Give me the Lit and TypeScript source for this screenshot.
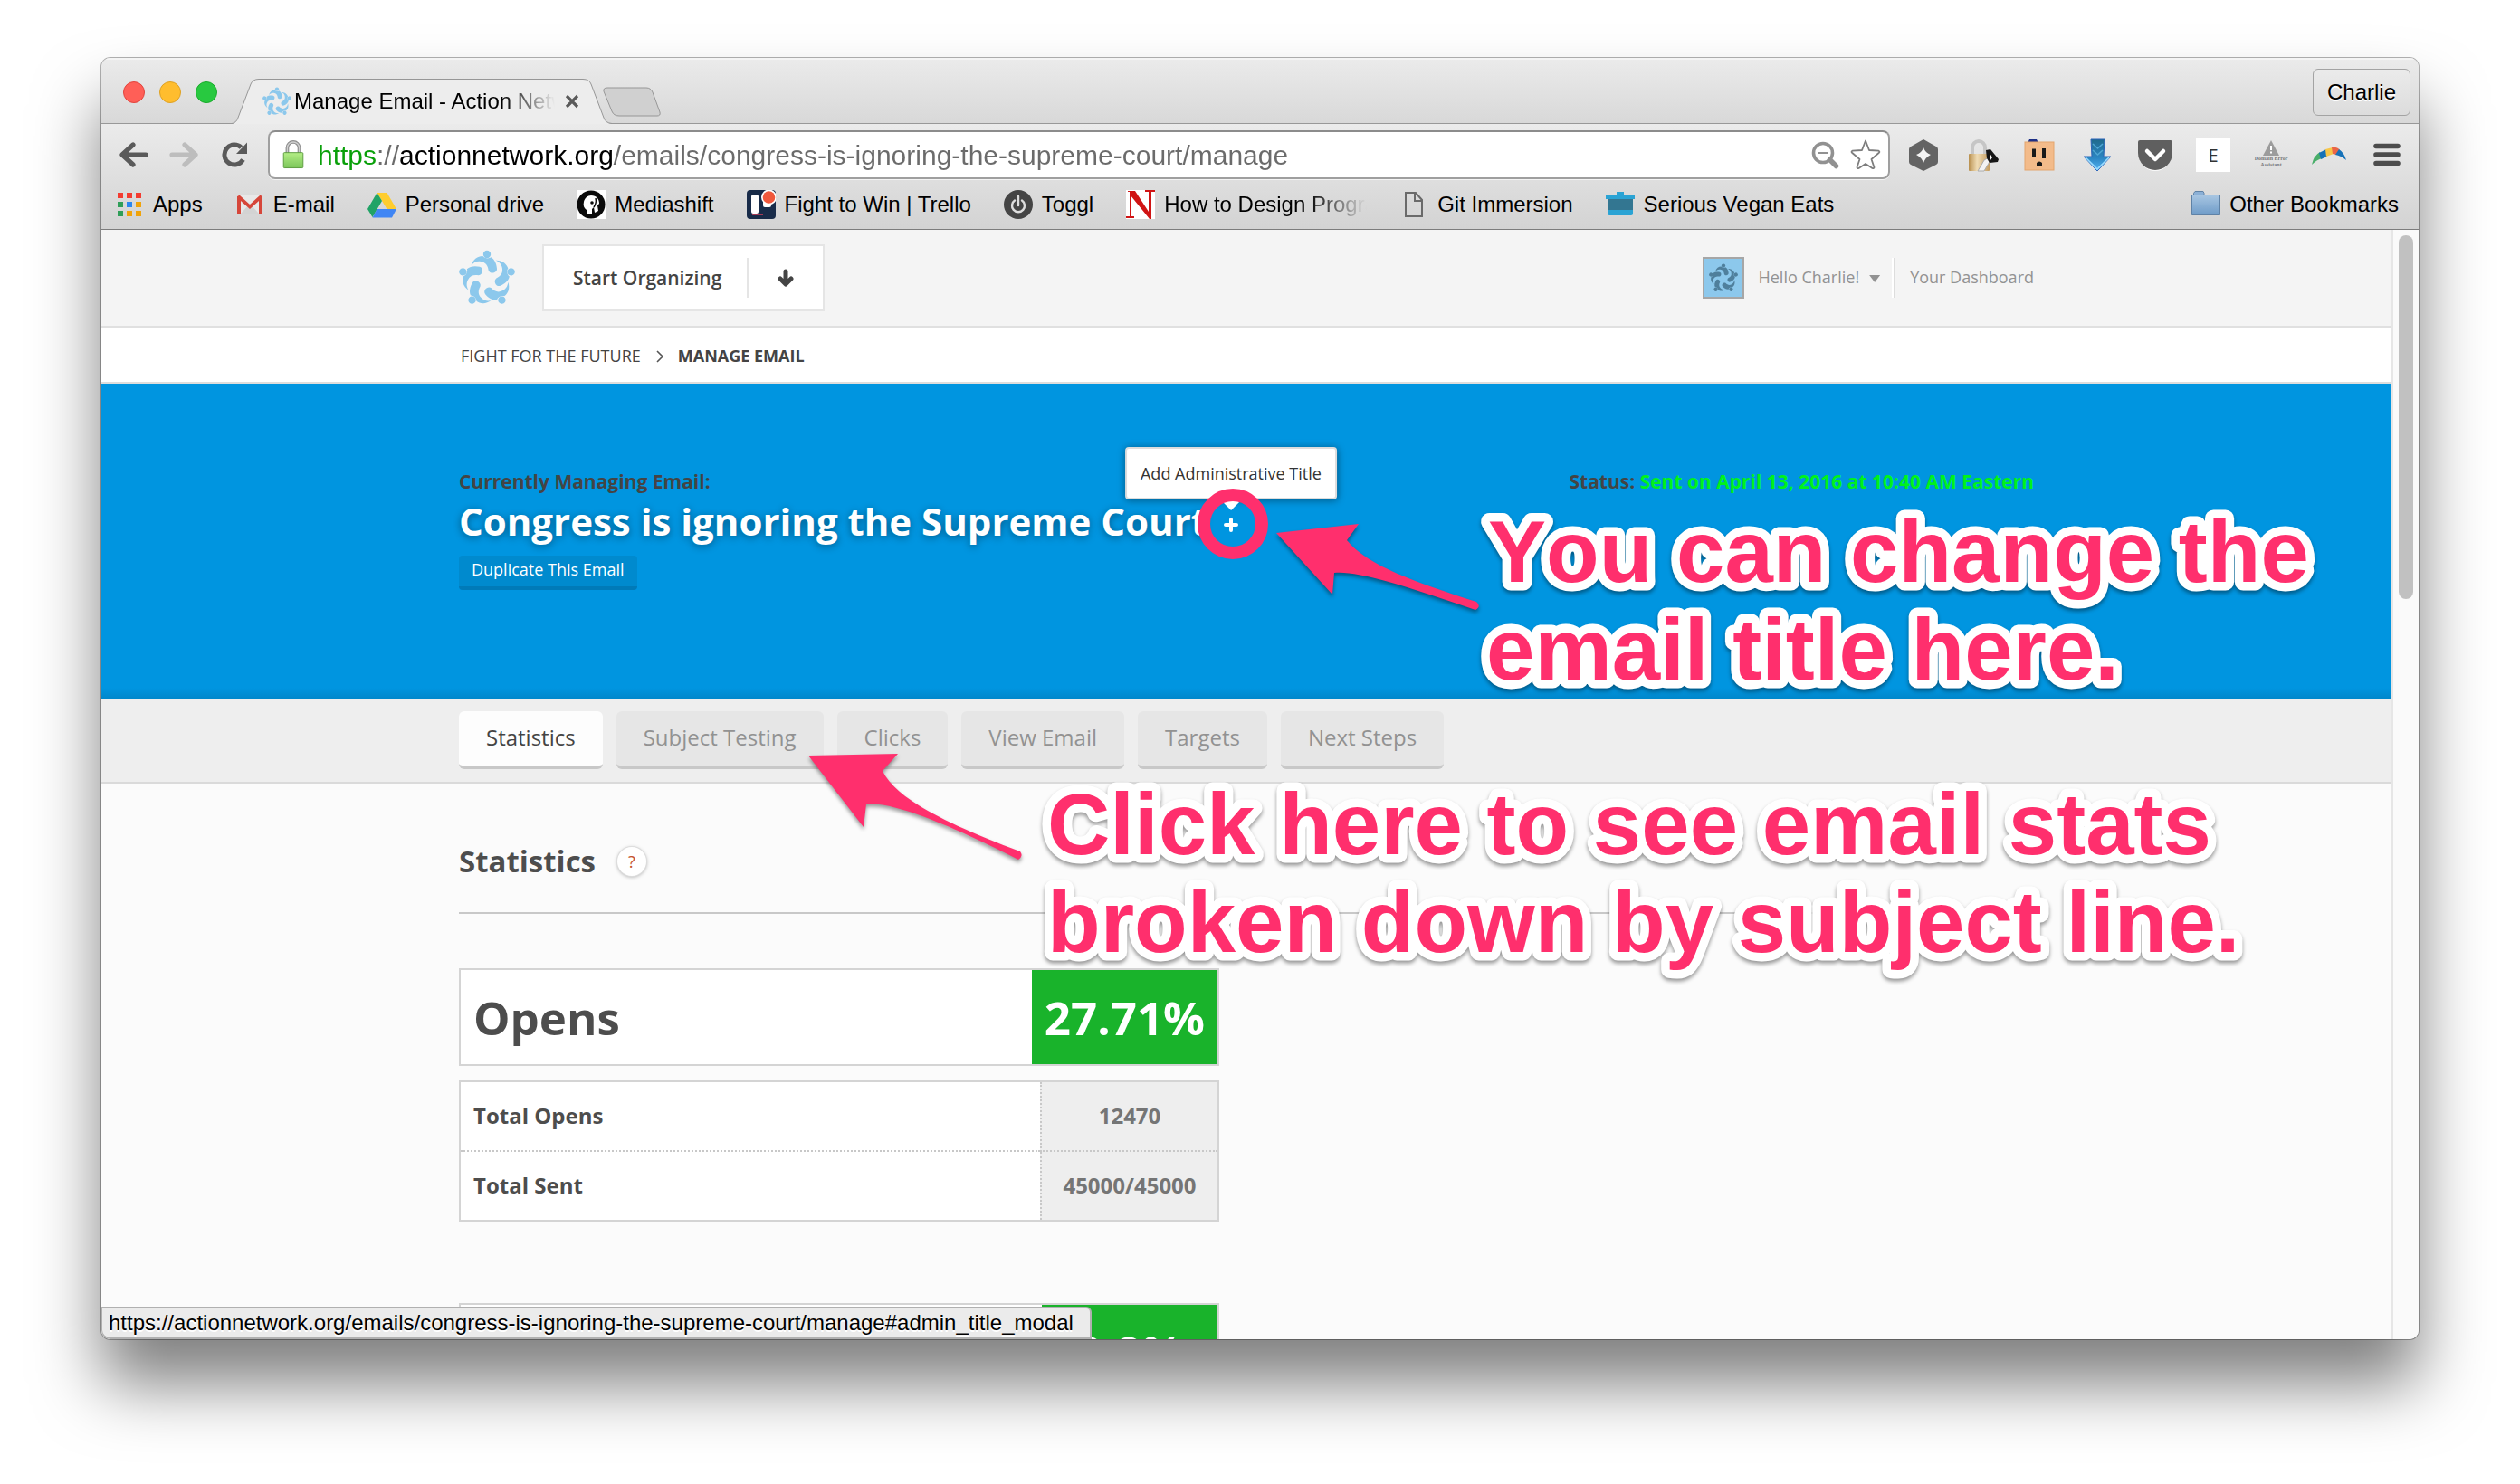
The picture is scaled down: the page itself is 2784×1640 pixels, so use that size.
import { LitElement, html, svg, css } from "lit";
import { customElement, property } from "lit/decorators.js";

const arm = "M125 127C131 105 149 95 163 96C170 105 184 105 190 100C203 107 209 124 210 138C211 153 187 157 182 143C180 127 172 116 156 114C142 112 132 118 125 127Z";

@customElement("network-mark")
class NetworkMark extends LitElement {
  static styles = css`
    :host { display: block; color: #8cc8ec; }
    .mark { display: block; width: 100%; height: 100%; fill: currentColor; }
  `;
  render() {
    return html`<svg class="mark" viewBox="84 76 186 184" aria-hidden="true">
      ${[0, 72, 144, 216, 288].map(
        (a) => svg`<g transform="rotate(${a} 177 174)"><circle cx="177" cy="90" r="12.5"/><path d=${arm}/></g>`
      )}
    </svg>`;
  }
}

const icons: Record<string, unknown> = {
  apps: svg`${[0, 1, 2].map((r) => [0, 1, 2].map((c) => svg`<rect x=${3 + c * 10} y=${3 + r * 10} width="6" height="6" fill=${["#f33b30", "#f33b30", "#f33b30", "#2f9e58", "#2a86f0", "#f0a30a", "#2f9e58", "#f0a30a", "#f0a30a"][r * 3 + c]}/>`))}`,
  gmail: svg`<path d="M2 6h28v20H2z" fill="#e8e8e8"/><path d="M6 26 16 15l10 11z" fill="#d3d3d3"/><path d="M2 26V7l2-1h1l11 10L27 6h1l2 1v19h-4V12L16 21 6 12v14z" fill="#d6463a"/>`,
  drive: svg`<path d="M10.500 3h11L32 21H21.500z" fill="#ffcd2e"/><path d="M10.500 3 16 12 5.500 30 0 21z" fill="#21a366"/><path d="M10.500 21H32l-5 9.500H5.500z" fill="#4086f4"/>`,
  media: svg`<path d="M0 0h32v32H0z" fill="#fff"/><circle cx="16" cy="16" r="15.500" fill="#0a0a0a"/><path d="M16 6c6 0 9 4 9 9l-2 2 1 6-4 2-1-6-2 2v5h-5l-1-4c-3-2-4-5-3-9 1-4 4-7 8-7z" fill="#fff"/><circle cx="17" cy="14" r="1.800" fill="#0a0a0a"/><path d="M21 9c1 4 0 7-2 10" fill="none" stroke="#0a0a0a" stroke-width="1.500"/>`,
  trello: svg`<rect width="32" height="32" rx="4" fill="#182b49"/><rect x="5" y="5" width="8" height="21" rx="2" fill="#fff"/><path d="M18 5h9v12q0 2-2 2h-5q-2 0-2-2z" fill="#fff"/><circle cx="24.500" cy="8" r="8.500" fill="#fff"/><circle cx="24.500" cy="8" r="6.800" fill="#f0583c"/><path d="M6 27h12" stroke="#a33a56" stroke-width="2"/>`,
  toggl: svg`<circle cx="16" cy="16" r="16" fill="#454545"/><path d="M12 11.500a7 7 0 1 0 8 0M16 7v10" fill="none" stroke="#ddd" stroke-width="2.400" stroke-linecap="round"/>`,
  news: svg`<path d="M0 0h32v32H0z" fill="#fff"/><path d="M2 1h8l15 23V2h-4V0h11v2h-4v30h-2L5 6v23h4v2H0v-2h4V2H2z" fill="#d01414"/>`,
  file: svg`<path d="M7 3h11l7 8v18H7zM17 3v9h8" fill="none" stroke="#6a6a6a" stroke-width="2"/>`,
  pot: svg`<path d="M12 2h8v4h12v4h-2v16q0 2-2 2H4q-2 0-2-2V10H0V6h12z" fill="#2aa3d4"/><path d="M2 10h28v12H2z" fill="#337691"/>`,
  folder: svg`<defs><linearGradient id="fold" x2="0" y2="1"><stop stop-color="#a8c6e2"/><stop offset="1" stop-color="#6e9bc8"/></linearGradient></defs><path d="M2.500 6V3.500L4 1.500h9l1 2V6" fill="#8bb0d6" stroke="#5f82a6"/><path d="M.5 5.500h31v22H.5z" fill="url(#fold)" stroke="#5f82a6"/>`,
  back: svg`<path d="M16 5 4 16l12 11M5 16h25" fill="none" stroke="#5a5a5a" stroke-width="5.200" stroke-linecap="round" stroke-linejoin="round"/>`,
  forward: svg`<path d="M17 5 29 16 17 27M28 16H3" fill="none" stroke="#bdbdbd" stroke-width="5.200" stroke-linecap="round" stroke-linejoin="round"/>`,
  reload: svg`<path d="M25.500 21.500A11 11 0 1 1 23.500 8" fill="none" stroke="#5a5a5a" stroke-width="5"/><path d="M30 2.500V15H18z" fill="#5a5a5a"/>`,
  lock: svg`<defs><linearGradient id="lk" x2="0" y2="1"><stop stop-color="#b4ee86"/><stop offset="1" stop-color="#7cc65a"/></linearGradient></defs><path d="M9 15V8a7 7 0 0 1 14 0v7" fill="none" stroke="#8e8e8e" stroke-width="4"/><path d="M9 15V8a7 7 0 0 1 14 0v7" fill="none" stroke="#cfcfcf" stroke-width="1.500"/><rect x="4.500" y="13.500" width="23" height="18" rx="1" fill="url(#lk)" stroke="#5a9a3c"/>`,
  zoomout: svg`<circle cx="14" cy="14" r="10.500" fill="none" stroke="#919191" stroke-width="3.600"/><path d="M9 14h10" stroke="#919191" stroke-width="2.200"/><path d="m21.500 21.500 7 7" stroke="#919191" stroke-width="5.500" stroke-linecap="round"/>`,
  star: svg`<path d="m17 1.500 4 10.500 10.500.7q1.500.8.4 2L23.500 22l3 9q-.3 1.600-2 1L17 27l-7.500 5q-1.700.6-2-1l3-9L2 14.700q-1.100-1.200.4-2L13 12z" fill="#fff" stroke="#7d7d7d" stroke-width="1.800" stroke-linejoin="round"/>`,
  hexa: svg`<path d="M19 2 33 10q2 1 2 3v14q0 2-2 3L19 37 5 30q-2-1-2-3V13q0-2 2-3z" fill="#646464"/><path d="M19 11q2 6 8 8-6 3-8 9-2-6-8-9 6-2 8-8z" fill="#f4f4f4"/>`,
  padlock: svg`<defs><linearGradient id="br"><stop stop-color="#b88f4e"/><stop offset=".4" stop-color="#f0dcb4"/><stop offset="1" stop-color="#c39c60"/></linearGradient></defs><path d="M9 19v-8a7 7 0 0 1 14 0v8" fill="none" stroke="#c6c6c6" stroke-width="4"/><rect x="5" y="18" width="23" height="19" rx="1" fill="url(#br)"/><path d="m15 37 7-12 5-3 2 3-7 12z" fill="#f2f2f2" stroke="#aaa"/><path d="m24 14 5-1 9 11-1 3-9 1-3-5z" fill="#161616"/><path d="m28 17 3 5-2 3z" fill="#fff"/>`,
  outlet: svg`<path d="m6 6 2-4h8l2 4z" fill="#1d2f86"/><rect x="3" y="5" width="32" height="31" fill="#f3bb8a" stroke="#e3a56e"/><path d="M13 12.500v9M24 12v11" stroke="#1a1a1a" stroke-width="4"/><path d="M16 31v-3q3-3 6 0v3z" fill="#1a1a1a"/>`,
  down: svg`<defs><linearGradient id="dn" x2="0" y2="1"><stop stop-color="#1f6a8c"/><stop offset=".6" stop-color="#2c87c4"/><stop offset="1" stop-color="#57b6f6"/></linearGradient></defs><path d="M12 2h15l-1 19h8L19 37 4 21h9z" fill="url(#dn)" stroke="#2b63b8" stroke-linejoin="round"/><path d="m14 7 5.500 5L25 7M14 14l5.500 5 5.500-5" fill="none" stroke="#4fa6d4" stroke-width="1.600"/><path d="m6 22 13 13 13-13" fill="none" stroke="#9adcff" stroke-width="1.600"/>`,
  pocket: svg`<path d="M1 6q0-2 2-2h32q2 0 2 2v13a18 18 0 0 1-36 0z" fill="#fff" opacity=".8"/><path d="M0 5q0-2 2-2h34q2 0 2 2v12a19 19 0 0 1-38 0z" fill="#5f5f5f"/><path d="m10 15 9 9 9-9" fill="none" stroke="#fff" stroke-width="4.500" stroke-linecap="round" stroke-linejoin="round"/>`,
  warn: svg`<path d="M19 3 28 20H10z" fill="#9c9c9c"/><path d="M19 9v5M19 15.500v2" stroke="#fff" stroke-width="2"/>`,
  boomerang: svg`<path d="M0 30q2-10 9-14l3 7q-6 1-12 7z" fill="#49ae6a"/><path d="m8 17 8-4 1 8-7 3z" fill="#1672b8"/><path d="m15 13 8-2 1 7-8 3z" fill="#f7c648"/><path d="M22 11q6-1 9 3l-4 5-4-1z" fill="#ea6547"/><path d="M30 13q6 4 8 12-6-5-12-6z" fill="#1672b8"/>`,
  menu: svg`<path d="M7 9.500h24M7 19h24M7 28.500h24" stroke="#4c4c4c" stroke-width="5.600" stroke-linecap="round"/>`,
  close: svg`<path d="m2 2 12 12M14 2 2 14" stroke="#5a5a5a" stroke-width="3.200"/>`,
  arrowdown: svg`<path d="M10 3v13M4 11l6 6 6-6" fill="none" stroke="#444" stroke-width="5" stroke-linecap="round" stroke-linejoin="round"/>`,
  plus: svg`<path d="M8 2v12M2 8h12" stroke="#fff" stroke-width="4" stroke-linecap="round"/>`,
  chevron: svg`<path d="m2 2 6 6-6 6" fill="none" stroke="#555" stroke-width="1.600"/>`,
};
const icon = (name: string, box = 32, cls = "icon") =>
  html`<svg class=${cls} viewBox="0 0 ${box} ${box}" aria-hidden="true">${icons[name]}</svg>`;

const bookmarks: [string, string][] = [
  ["apps", "Apps"],
  ["gmail", "E-mail"],
  ["drive", "Personal drive"],
  ["media", "Mediashift"],
  ["trello", "Fight to Win | Trello"],
  ["toggl", "Toggl"],
  ["news", "How to Design Programs"],
  ["file", "Git Immersion"],
  ["pot", "Serious Vegan Eats"],
];

@customElement("browser-chrome")
class BrowserChrome extends LitElement {
  static styles = css`
    :host { display: block; font-family: "Liberation Sans", Arial, sans-serif; font-size: 24px; color: #000; }
    * { box-sizing: border-box; }
    button { border: 0; padding: 0; background: none; font: inherit; color: inherit; }
    a { color: inherit; text-decoration: none; }
    .strip { display: flex; align-items: flex-end; height: 73px; padding-left: 24px; background: linear-gradient(#ebebeb, #d8d8d8); box-shadow: inset 0 -1px #989898, inset 0 2px #f4f4f4; }
    .lights { display: flex; gap: 16px; height: 24px; margin-bottom: 23px; }
    .light { width: 24px; height: 24px; border-radius: 50%; border: 1px solid; }
    .red { background: #ff5f57; border-color: #e2443d; }
    .amber { background: #ffbd2e; border-color: #dea123; }
    .green { background: #28c940; border-color: #1aab2c; }
    .tab { position: relative; display: flex; align-items: center; width: 420px; height: 50px; margin-left: 16px; padding: 0 36px 0 34px; gap: 3px; }
    .shape { position: absolute; inset: 0; width: 100%; height: 100%; }
    .mark { position: relative; width: 32px; height: 32px; flex: none; }
    .label { position: relative; flex: 1; overflow: hidden; white-space: nowrap; mask-image: linear-gradient(to right, #000 80%, transparent); line-height: 30px; }
    .close { position: relative; width: 16px; height: 16px; margin-left: 8px; }
    .newtab { width: 64px; height: 33px; margin: 0 0 8px -10px; }
    .fill { display: block; width: 100%; height: 100%; }
    .profile { width: 108px; height: 52px; margin: 0 9px 9px auto; border: 1px solid #a3a3a3; border-radius: 6px; background: linear-gradient(#ebebeb, #dcdcdc); text-shadow: 0 2px #fff; }
    .tools { background: linear-gradient(#ebebeb, #d3d3d3); border-bottom: 1px solid #7c7c7c; }
    .bar { display: flex; align-items: center; padding: 7px 16px 0 19px; height: 61px; }
    .nav { display: flex; gap: 24px; }
    .nav button { width: 32px; height: 32px; }
    .address { flex: 1; display: flex; align-items: center; height: 54px; margin: 0 18px 0 21px; padding: 0 8px 0 11px; background: #fff; border: 2px solid #9f9f9f; border-top-color: #8c8c8c; border-radius: 8px; box-shadow: 0 1px #f4f4f4; }
    .lock { width: 30px; height: 32px; flex: none; }
    .url {
      flex: 1; min-width: 0; margin-left: 12px; padding: 2px 0 0; border: 0; outline: 0; height: 42px;
      font: 30px "Liberation Sans", Arial, sans-serif; color: transparent;
      background: linear-gradient(to right, #0aa00a 65px, #6b6b6b 65px, #6b6b6b 90px, #000 90px, #000 327px, #6b6b6b 327px);
      -webkit-background-clip: text; background-clip: text;
    }
    .address button { width: 32px; height: 32px; margin-left: 10px; }
    .address .starbox { width: 34px; height: 34px; margin-left: 12px; }
    .ext { display: flex; gap: 26px; }
    .ext button { position: relative; width: 38px; height: 38px; }
    .ext .letter { background: #fff; font-family: "Open Sans", sans-serif; font-size: 20px; color: #333; }
    .tiny { position: absolute; top: 20px; left: 0; width: 38px; font: bold 6px/7px "Liberation Serif", serif; color: #777; text-align: center; white-space: nowrap; }
    .marks { display: flex; align-items: center; gap: 36px; height: 55px; padding: 0 22px 0 15px; }
    .marks a { display: flex; align-items: center; gap: 10px; white-space: nowrap; line-height: 30px; }
    .marks .icon { width: 32px; height: 32px; flex: none; }
    .marks .news { width: 266px; overflow: hidden; mask-image: linear-gradient(to right, #000 75%, transparent); }
    .marks .other { margin-left: auto; }
  `;
  render() {
    return html`
      <header>
        <div class="strip">
          <div class="lights"><span class="light red"></span><span class="light amber"></span><span class="light green"></span></div>
          <div class="tab">
            <svg class="shape" viewBox="0 0 420 50" preserveAspectRatio="none" aria-hidden="true">
              <path d="M0 50Q5 49 7 43L21 6Q23 .5 30 .5H388Q395 .5 397 6L411 43Q413 49 420 50Z" fill="#ededed"/>
              <path d="M0 49.500Q5 49 7 43L21 6Q23 .5 30 .5H388Q395 .5 397 6L411 43Q413 49 420 49.500" fill="none" stroke="#969696"/>
            </svg>
            <network-mark class="mark"></network-mark>
            <span class="label">Manage Email - Action Network</span>
            <button class="close" aria-label="Close tab">${icon("close", 16, "fill")}</button>
          </div>
          <button class="newtab" aria-label="New tab">
            <svg class="fill" viewBox="0 0 64 33"><path d="M5 1H48Q53 1 55 6L63 28Q64 32 60 32H18Q12 32 10 27L1 5Q0 1 5 1Z" fill="#d0d0d0" stroke="#969696"/></svg>
          </button>
          <button class="profile">Charlie</button>
        </div>
        <div class="tools">
          <div class="bar">
            <div class="nav">
              <button aria-label="Back">${icon("back", 32, "fill")}</button>
              <button aria-label="Forward">${icon("forward", 32, "fill")}</button>
              <button aria-label="Reload">${icon("reload", 32, "fill")}</button>
            </div>
            <div class="address">
              ${icon("lock", 32, "lock")}
              <input class="url" aria-label="Address" value="https://actionnetwork.org/emails/congress-is-ignoring-the-supreme-court/manage" />
              <button aria-label="Zoom">${icon("zoomout", 32, "fill")}</button>
              <button class="starbox" aria-label="Bookmark this page">${icon("star", 34, "fill")}</button>
            </div>
            <div class="ext">
              ${["hexa", "padlock", "outlet", "down", "pocket"].map((n) => html`<button aria-label=${n}>${icon(n, 38, "fill")}</button>`)}
              <button class="letter">E</button>
              <button>${icon("warn", 38, "fill")}<span class="tiny">Domain Error<br />Assistant</span></button>
              ${["boomerang", "menu"].map((n) => html`<button aria-label=${n}>${icon(n, 38, "fill")}</button>`)}
            </div>
          </div>
          <nav class="marks">
            ${bookmarks.map(([n, t]) => html`<a href="#" class=${n}>${icon(n)}${t}</a>`)}
            <a href="#" class="other">${icon("folder")}Other Bookmarks</a>
          </nav>
        </div>
      </header>
    `;
  }
}

@customElement("stat-banner")
class StatBanner extends LitElement {
  @property() name = "";
  @property() value = "";
  static styles = css`
    :host { display: flex; height: 108px; box-sizing: border-box; border: 2px solid #d4d4d4; background: #fff; font-size: 51px; font-weight: 700; line-height: 104px; color: #4d4d4d; }
    .name { flex: 1; padding-left: 14px; }
    .value { box-sizing: border-box; min-width: 194px; padding: 0 14px; background: #19b32b; color: #fff; text-align: center; }
  `;
  render() {
    return html`<span class="name">${this.name}</span><span class="value">${this.value}</span>`;
  }
}

@customElement("manage-page")
class ManagePage extends LitElement {
  static styles = css`
    :host { display: block; background: #fbfbfb; font-family: "Open Sans", sans-serif; font-size: 18px; color: #444; }
    * { box-sizing: border-box; }
    button { border: 0; padding: 0; background: none; font: inherit; color: inherit; }
    a { color: inherit; text-decoration: none; }
    h1, h2 { margin: 0; }
    .wrap { width: 1740px; max-width: 100%; margin: 0 auto; }
    .row { display: flex; align-items: center; }
    .fill { display: block; width: 100%; height: 100%; }
    .top { background: #f4f4f4; border-bottom: 2px solid #e0e0e0; }
    .top .row { height: 106px; }
    .logo { width: 62px; height: 62px; }
    .start { display: flex; align-items: center; height: 74px; margin-left: 30px; background: #fff; border: 2px solid #e5e5e5; font-size: 21px; font-weight: 600; }
    .start .text { padding: 0 28px 0 32px; }
    .start .drop { width: 84px; height: 44px; display: flex; align-items: center; justify-content: center; border-left: 2px solid #e5e5e5; }
    .drop .icon { width: 20px; height: 20px; }
    .user { margin-left: auto; color: #929292; line-height: 26px; }
    .user a { padding-bottom: 2px; }
    .avatar { width: 46px; height: 46px; padding: 5px; border: 2px solid #a6a6a6; background: #8cc8ec; margin-right: 15px; }
    .avatar network-mark { color: #4f7f9c; width: 32px; height: 32px; }
    .caret { width: 12px; height: 8px; margin: 2px 13px 0 11px; background: #929292; clip-path: polygon(0 0, 100% 0, 50% 100%); }
    .rule { width: 4px; height: 44px; margin-right: 16px; border-left: 2px solid #fff; border-right: 2px solid #ddd; }
    .crumbs { background: #fff; border-bottom: 2px solid #ddd; line-height: 58px; padding-top: 2px; }
    .crumbs .row { padding-left: 2px; }
    .crumbs .icon { width: 12px; height: 16px; margin: 2px 14px 0 15px; }
    .hero { min-height: 348px; padding-top: 94px; background: linear-gradient(#0095e0 calc(100% - 12px), #0087cb); }
    .hero .wrap { display: flex; justify-content: space-between; }
    .small { font-size: 21px; line-height: 28px; font-weight: 700; margin: 0; }
    .sent { color: #00f21c; }
    .title { gap: 18px; margin: 2px 0 10px; }
    h1 { font-size: 42px; line-height: 56px; font-weight: 700; color: #fff; text-shadow: 0 2px 8px rgba(0, 0, 0, .4); white-space: nowrap; }
    .add { position: relative; width: 16px; height: 16px; margin-top: 8px; }
    .tip { position: absolute; left: 50%; bottom: calc(100% + 20px); transform: translateX(-50%); padding: 0 15px; border: 2px solid #ddd; border-radius: 4px; background: #fff; color: #333; line-height: 54px; white-space: nowrap; box-shadow: 0 1px 8px rgba(0, 0, 0, .4); }
    .tip::after { content: ""; position: absolute; left: 50%; top: 100%; margin-left: -14px; border: 14px solid transparent; border-top-color: #fff; border-bottom: 0; }
    .dup { height: 38px; padding: 0 14px 4px; line-height: 28px; border-radius: 4px; background: #008ace; border-bottom: 4px solid #007ab8; color: #fff; }
    .tabs { background: #eee; border-bottom: 2px solid #dadada; padding: 14px 0; }
    .tabs .row { gap: 15px; }
    .tabs button { height: 64px; padding: 0 30px 2px; border-radius: 6px; background: #e6e6e6; border-bottom: 4px solid #c8c8c8; color: #929292; font-size: 24px; line-height: 58px; }
    .tabs .on { background: #fdfdfd; color: #444; }
    .head { margin-top: 64px; padding-bottom: 34px; margin-bottom: 60px; border-bottom: 2px solid #c8c8c8; gap: 24px; }
    h2 { font-size: 33px; line-height: 44px; font-weight: 700; color: #4d4d4d; }
    .help { width: 32px; height: 32px; border-radius: 50%; background: #fff; box-shadow: 0 0 0 1px #ddd, 0 1px 4px rgba(0, 0, 0, .35); color: #c4512d; line-height: 32px; }
    .column { width: 840px; max-width: 100%; }
    .data { width: 100%; margin: 16px 0 90px; border-collapse: separate; border-spacing: 0; border: 2px solid #d4d4d4; background: #fff; font-size: 24px; line-height: 36px; font-weight: 700; color: #4d4d4d; }
    .data th { padding: 19px 14px 20px; text-align: left; }
    .data td { width: 196px; padding: 19px 0 20px; text-align: center; background: #eee; color: #757575; border-left: 2px dotted #c8c8c8; }
    .data .first { border-bottom: 2px dotted #c8c8c8; }
  `;
  render() {
    return html`
      <div class="top"><div class="wrap row">
        <network-mark class="logo"></network-mark>
        <button class="start"><span class="text">Start Organizing</span><span class="drop">${icon("arrowdown", 20)}</span></button>
        <div class="user row">
          <span class="avatar"><network-mark></network-mark></span>
          <a href="#">Hello Charlie!</a><span class="caret"></span><span class="rule"></span><a href="#">Your Dashboard</a>
        </div>
      </div></div>
      <nav class="crumbs"><div class="wrap row">
        <a href="#">FIGHT FOR THE FUTURE</a><svg class="icon" viewBox="-1 0 12 16" aria-hidden="true">${icons.chevron}</svg><b>MANAGE EMAIL</b>
      </div></nav>
      <section class="hero"><div class="wrap">
        <div>
          <p class="small">Currently Managing Email:</p>
          <div class="title row">
            <h1>Congress is ignoring the Supreme Court</h1>
            <button class="add" aria-label="Add">${icon("plus", 16, "fill")}<span class="tip">Add Administrative Title</span></button>
          </div>
          <button class="dup">Duplicate This Email</button>
        </div>
        <p class="small">Status: <span class="sent">Sent on April 13, 2016 at 10:40 AM Eastern</span></p>
      </div></section>
      <div class="tabs"><div class="wrap row">
        ${["Statistics", "Subject Testing", "Clicks", "View Email", "Targets", "Next Steps"].map(
          (t, i) => html`<button class=${i === 0 ? "on" : ""}>${t}</button>`
        )}
      </div></div>
      <main class="wrap">
        <div class="head row"><h2>Statistics</h2><button class="help">?</button></div>
        <div class="column">
          <stat-banner name="Opens" value="27.71%"></stat-banner>
          <table class="data">
            <tr><th class="first">Total Opens</th><td class="first">12470</td></tr>
            <tr><th>Total Sent</th><td>45000/45000</td></tr>
          </table>
          <stat-banner name="" value="2.8%"></stat-banner>
        </div>
      </main>
    `;
  }
}

@customElement("app-root")
class AppRoot extends LitElement {
  static styles = css`
    :host { display: block; background: #fff; }
    * { box-sizing: border-box; }
    .stage { position: relative; height: 100vh; padding: 64px 112px 160px; overflow: hidden; }
    .window { position: relative; display: flex; flex-direction: column; height: 100%; border-radius: 10px; box-shadow: 0 0 0 1px rgba(0, 0, 0, .3), 0 50px 72px rgba(0, 0, 0, .5); }
    .clip { display: flex; flex-direction: column; flex: 1; min-height: 0; border-radius: 10px; overflow: hidden; }
    .view { flex: 1; min-height: 0; display: flex; }
    .page { flex: 1; min-width: 0; overflow: hidden; }
    .track { width: 30px; padding: 6px; background: #fafafa; border-left: 2px solid #e6e6e6; }
    .thumb { height: 402px; border-radius: 8px; background: #c1c1c1; }
    .status { position: absolute; left: 0; bottom: 0; height: 36px; padding: 0 18px 0 7px; border: 2px solid #b0b0b0; border-width: 2px 2px 2px 1px; border-radius: 0 6px 0 10px; background: #ebebeb; font: 24px/32px "Liberation Sans", Arial, sans-serif; color: #000; text-shadow: 0 2px #fff; }
    .notes { position: absolute; left: 0; top: 0; width: 2784px; height: 1640px; overflow: visible; pointer-events: none; }
    .ink { fill: #ff2f6d; filter: drop-shadow(0 3px 2px rgba(0, 0, 0, .4)); }
    .ring { fill: none; stroke: #ff2f6d; stroke-width: 14px; }
    .say { font: bold 96px "Liberation Sans", Arial, sans-serif; font-kerning: none; stroke: #fff; stroke-width: 19px; stroke-linejoin: round; paint-order: stroke; }
  `;
  render() {
    return html`
      <div class="stage">
        <div class="window">
          <div class="clip">
            <browser-chrome></browser-chrome>
            <div class="view">
              <manage-page class="page"></manage-page>
              <div class="track"><div class="thumb"></div></div>
            </div>
          </div>
          <div class="status">https://actionnetwork.org/emails/congress-is-ignoring-the-supreme-court/manage#admin_title_modal</div>
        </div>
        <svg class="notes" viewBox="0 0 2784 1640">
          <circle class="ring" cx="1362" cy="579" r="32"/>
          <g class="ink">
            <path d="M1410 589 1501 579 1488 597C1508 622 1552 640 1631 665Q1637 670 1630 674C1560 650 1500 630 1474 633L1472 657Z"/>
            <path d="M893 835 992 833 975 852C990 882 1040 908 1127 941Q1131 946 1125 950C1050 912 985 885 957 889L954 914Z"/>
          </g>
          <g class="ink say">
            <text x="1644" y="643">You can change the</text>
            <text x="1642" y="751">email title here.</text>
            <text x="1157" y="944">Click here to see email stats</text>
            <text x="1157" y="1052">broken down by subject line.</text>
          </g>
        </svg>
      </div>
    `;
  }
}
